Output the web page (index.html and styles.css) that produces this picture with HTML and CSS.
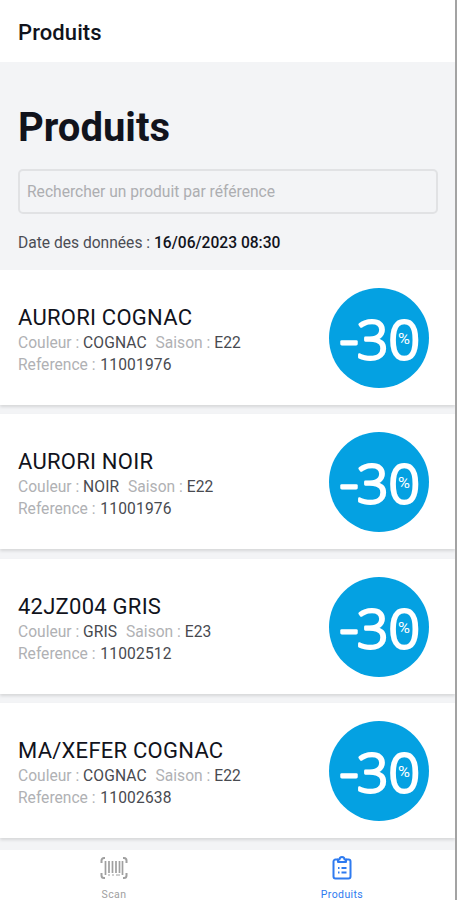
FILE: index.html
```html
<!DOCTYPE html>
<html lang="fr">
<head>
    <meta charset="UTF-8">
    <meta name="viewport" content="width=device-width, initial-scale=1.0">
    <title>Produits</title>
    <link rel="stylesheet" href="styles.css">
</head>
<body>
    <div class="app">
        <header class="topbar">Produits</header>

        <section class="search-panel">
            <h1 class="title">Produits</h1>
            <input type="text" class="search-box" placeholder="Rechercher un produit par référence">
            <p class="data-date">Date des données : <strong>16/06/2023 08:30</strong></p>
        </section>

        <main class="product-list">
            <article class="product">
                <div class="product-info">
                    <h2 class="product-name">AURORI COGNAC</h2>
                    <p class="product-line">Couleur : <span class="value">COGNAC</span> <span class="season">Saison :</span> <span class="value">E22</span></p>
                    <p class="product-line">Reference : <span class="value">11001976</span></p>
                </div>
                <svg class="discount" viewBox="0 0 100 100">
                    <circle cx="50" cy="50" r="50"/>
                    <text class="minus" x="10.500" y="69" textLength="19" lengthAdjust="spacingAndGlyphs">-</text>
                    <text class="amount" x="28" y="70.500" textLength="63" lengthAdjust="spacingAndGlyphs">30</text>
                    <text class="percent" x="69" y="56" textLength="12" lengthAdjust="spacingAndGlyphs">%</text>
                </svg>
            </article>
            <article class="product">
                <div class="product-info">
                    <h2 class="product-name">AURORI NOIR</h2>
                    <p class="product-line">Couleur : <span class="value">NOIR</span> <span class="season">Saison :</span> <span class="value">E22</span></p>
                    <p class="product-line">Reference : <span class="value">11001976</span></p>
                </div>
                <svg class="discount" viewBox="0 0 100 100">
                    <circle cx="50" cy="50" r="50"/>
                    <text class="minus" x="10.500" y="69" textLength="19" lengthAdjust="spacingAndGlyphs">-</text>
                    <text class="amount" x="28" y="70.500" textLength="63" lengthAdjust="spacingAndGlyphs">30</text>
                    <text class="percent" x="69" y="56" textLength="12" lengthAdjust="spacingAndGlyphs">%</text>
                </svg>
            </article>
            <article class="product">
                <div class="product-info">
                    <h2 class="product-name">42JZ004 GRIS</h2>
                    <p class="product-line">Couleur : <span class="value">GRIS</span> <span class="season">Saison :</span> <span class="value">E23</span></p>
                    <p class="product-line">Reference : <span class="value">11002512</span></p>
                </div>
                <svg class="discount" viewBox="0 0 100 100">
                    <circle cx="50" cy="50" r="50"/>
                    <text class="minus" x="10.500" y="69" textLength="19" lengthAdjust="spacingAndGlyphs">-</text>
                    <text class="amount" x="28" y="70.500" textLength="63" lengthAdjust="spacingAndGlyphs">30</text>
                    <text class="percent" x="69" y="56" textLength="12" lengthAdjust="spacingAndGlyphs">%</text>
                </svg>
            </article>
            <article class="product">
                <div class="product-info">
                    <h2 class="product-name">MA/XEFER COGNAC</h2>
                    <p class="product-line">Couleur : <span class="value">COGNAC</span> <span class="season">Saison :</span> <span class="value">E22</span></p>
                    <p class="product-line">Reference : <span class="value">11002638</span></p>
                </div>
                <svg class="discount" viewBox="0 0 100 100">
                    <circle cx="50" cy="50" r="50"/>
                    <text class="minus" x="10.500" y="69" textLength="19" lengthAdjust="spacingAndGlyphs">-</text>
                    <text class="amount" x="28" y="70.500" textLength="63" lengthAdjust="spacingAndGlyphs">30</text>
                    <text class="percent" x="69" y="56" textLength="12" lengthAdjust="spacingAndGlyphs">%</text>
                </svg>
            </article>
        </main>

        <nav class="tabs">
            <a class="tab">
                <svg class="tab-icon" viewBox="0 0 28 24">
                    <path d="M5 2H4a2.500 2.500 0 0 0-2.500 2.500V7M23 2h1a2.500 2.500 0 0 1 2.500 2.500V7M5 22H4a2.500 2.500 0 0 1-2.500-2.500V17M23 22h1a2.500 2.500 0 0 0 2.500-2.500V17"/>
                    <path class="bars" d="M5.500 5v14M9 5v12M12.500 5v12M16 5v12M19.500 5v12M22.500 5v14"/>
                    <path class="thin" d="M8 19h2M12 19h2M16 19h4"/>
                </svg>
                <span>Scan</span>
            </a>
            <a class="tab active">
                <svg class="tab-icon" viewBox="0 0 28 24">
                    <path d="M10 3.500H7.500a2 2 0 0 0-2 2v15a2 2 0 0 0 2 2h13a2 2 0 0 0 2-2v-15a2 2 0 0 0-2-2H18"/>
                    <path d="M10 3.500h1.500a2.500 2.500 0 0 1 5 0H18V6h-8z"/>
                    <path d="M10 12h1.500M13.500 12H18.500M10 16.500h1.500M13.500 16.500H18.500"/>
                </svg>
                <span>Produits</span>
            </a>
        </nav>
    </div>
</body>
</html>
```
FILE: styles.css
```css
* {
    box-sizing: border-box;
}

body {
    margin: 0;
    background: #fff;
    font-family: Roboto, "Liberation Sans", sans-serif;
    color: #11131c;
}

h1, h2, p {
    margin: 0;
}

.app {
    width: 457px;
    height: 900px;
    display: flex;
    flex-direction: column;
    overflow: hidden;
    border-right: 2px solid #a3a3a3;
}

/* header */
.topbar {
    flex: none;
    height: 62px;
    padding: 0 18px;
    font-size: 22px;
    font-weight: 500;
    line-height: 65px;
    letter-spacing: 0.1px;
}

.search-panel {
    flex: none;
    height: 208px;
    padding: 42px 17px 0 18px;
    background: #f3f4f6;
}

.title {
    font-size: 40px;
    font-weight: 700;
    line-height: 48px;
}

.search-box {
    display: block;
    width: 420px;
    height: 45px;
    margin-top: 17px;
    padding: 1px 7px 0;
    border: 2px solid #e1e2e4;
    border-radius: 5px;
    background: transparent;
    font-family: inherit;
    font-size: 15.6px;
}

.search-box::placeholder {
    color: #adaeb1;
}

.data-date {
    margin-top: 19px;
    font-size: 15.6px;
    line-height: 20px;
    color: #4b4d54;
}

.data-date strong {
    font-weight: 500;
    color: #11131c;
}

/* products */
.product-list {
    flex: 1;
    min-height: 0;
    overflow: hidden;
    background: #f3f4f6;
}

.product {
    display: flex;
    justify-content: space-between;
    height: 135px;
    margin-bottom: 9.3px;
    padding: 18px 26px 0 18px;
    background: #fff;
    box-shadow: 0 2px 3px rgba(0, 0, 0, 0.12);
}

.product-info {
    padding-top: 16px;
}

.product-name {
    font-size: 22px;
    font-weight: 400;
    line-height: 28px;
    letter-spacing: 0.25px;
}

.product-line {
    font-size: 15.6px;
    line-height: 22px;
    color: #b0b1b4;
    white-space: nowrap;
}

.value {
    letter-spacing: 0.1px;
    color: #484a50;
}

.product-line:last-child .value {
    margin-left: 1px;
    letter-spacing: 0.15px;
}

.season {
    margin-left: 5px;
}

.discount {
    width: 100px;
    height: 100px;
    fill: #04a1e2;
}

.discount text {
    fill: #fff;
    font-family: "Open Sans", "Noto Sans", sans-serif;
}

.minus,
.amount {
    font-size: 53px;
    font-weight: 300;
    stroke: #fff;
    stroke-width: 2.8;
    stroke-linejoin: round;
}

.discount .percent {
    font-family: Roboto, sans-serif;
    font-size: 15px;
    font-weight: 400;
}

/* bottom tabs */
.tabs {
    flex: none;
    display: flex;
    height: 50px;
    background: #fff;
}

.tab {
    flex: 1;
    display: flex;
    flex-direction: column;
    align-items: center;
    padding: 6px 0 0 1px;
    font-size: 10.5px;
    line-height: 12px;
    letter-spacing: 0.4px;
    color: #a0a0a0;
}

.tab.active {
    padding-left: 2px;
    color: #2f7bf0;
}

.tab-icon {
    flex: none;
    width: 28px;
    height: 24px;
    margin-bottom: 9px;
    fill: none;
    stroke: currentColor;
    stroke-width: 2;
    stroke-linejoin: round;
}

.bars {
    stroke-width: 1.7;
}

.thin {
    stroke-width: 1;
}
```
